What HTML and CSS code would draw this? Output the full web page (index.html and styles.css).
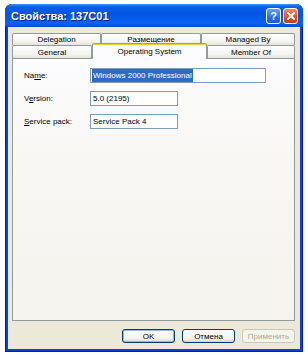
FILE: index.html
```html
<!DOCTYPE html>
<html lang="ru">
<head>
    <meta charset="UTF-8">
    <title>Свойства: 137C01</title>
    <link rel="stylesheet" href="styles.css">
</head>
<body>
<div class="window">
    <div class="titlebar">
        <span class="title">Свойства: 137C01</span>
        <div class="caption-btns">
            <span class="cap-btn help">?</span>
            <span class="cap-btn close">
                <svg width="8" height="8" viewBox="0 0 8 8"><path d="M1 1 L7 7 M7 1 L1 7" stroke="#fff" stroke-width="1.8" stroke-linecap="square"/></svg>
            </span>
        </div>
    </div>

    <div class="client">
        <div class="tabs">
            <div class="tab-row">
                <div class="tab w-deleg">Delegation</div>
                <div class="tab w-razm">Размещение</div>
                <div class="tab w-managed">Managed By</div>
            </div>
            <div class="tab-row">
                <div class="tab w-general">General</div>
                <div class="tab selected w-os">Operating System</div>
                <div class="tab w-member">Member Of</div>
            </div>
        </div>

        <div class="panel">
            <div class="field">
                <span class="label">Na<u>m</u>e:</span>
                <div class="edit wide"><span class="sel">Windows 2000 Professional</span></div>
            </div>
            <div class="field">
                <span class="label">V<u>e</u>rsion:</span>
                <div class="edit">5.0 (2195)</div>
            </div>
            <div class="field">
                <span class="label"><u>S</u>ervice pack:</span>
                <div class="edit">Service Pack 4</div>
            </div>
        </div>

        <div class="buttons">
            <button class="btn default">OK</button>
            <button class="btn">Отмена</button>
            <button class="btn" disabled>Применить</button>
        </div>
    </div>
</div>
</body>
</html>
```

FILE: styles.css
```css
body {
    margin: 0;
    background: #fff;
    font-family: "Liberation Sans", Arial, sans-serif;
    font-size: 8px;
    color: #000;
}

.window {
    margin: 4px 0 0 5px;
    width: 298px;
    height: 348px;
    display: flex;
    flex-direction: column;
    background: #0842d6;
    border-radius: 7px 7px 0 0;
    box-shadow: inset 1px 0 0 #0019a8, inset -1px 0 0 #0019a8, inset 0 -1px 0 #0019a8;
}

.titlebar {
    height: 23px;
    display: flex;
    align-items: center;
    justify-content: space-between;
    padding: 0 5px 0 6px;
    border-radius: 7px 7px 0 0;
    background: linear-gradient(to bottom, #3d95ff 0%, #0a5fe8 12%, #0055e5 45%, #0a63f0 85%, #0048d0 100%);
}

.title {
    color: #fff;
    font-weight: bold;
    font-size: 11px;
    text-shadow: 1px 1px 0 #0a1e80;
    padding-top: 1px;
}

.caption-btns {
    display: flex;
    gap: 2px;
}

.cap-btn {
    width: 13px;
    height: 14px;
    border: 1px solid #fff;
    border-radius: 3px;
    display: flex;
    align-items: center;
    justify-content: center;
    color: #fff;
    font-weight: bold;
    font-size: 11px;
}

.help {
    background: linear-gradient(to bottom, #5ea2ff, #2a6ee8 60%, #1d5ad8);
}

.close {
    background: linear-gradient(to bottom, #f08a62, #e0502a 60%, #c43a12);
}

.client {
    flex: 1;
    margin: 0 3px 3px 3px;
    background: #ece9d8;
    padding: 6px 5px 0 4px;
    display: flex;
    flex-direction: column;
}

.tab-row {
    display: flex;
}

.tab {
    height: 12px;
    line-height: 12px;
    text-align: center;
    border: 1px solid #919b9c;
    border-bottom: none;
    border-radius: 2px 2px 0 0;
    background: linear-gradient(to bottom, #fff, #f3f3ef 70%, #e4e2da);
    box-sizing: border-box;
}

.tab-row + .tab-row .tab {
    height: 13px;
    line-height: 13px;
}

.w-deleg { width: 89px; }
.w-razm { width: 100px; }
.w-managed { width: 94px; }
.w-general { width: 80px; }
.w-os { width: 115px; }
.w-member { width: 88px; }

.tab-row + .tab-row .tab.selected {
    position: relative;
    height: 16px;
    line-height: 15px;
    margin: -2px 0 -1px 0;
    background: #fcfcfe;
    border-top: 1px solid #e68b2c;
    box-shadow: inset 0 1px 0 #ffc73c;
}

.panel {
    height: 263px;
    box-sizing: border-box;
    border: 1px solid #919b9c;
    background: linear-gradient(to bottom, #fcfcfe 0%, #f8f7f3 40%, #f5f3ee 100%);
    padding: 9px 0 0 11px;
    display: flex;
    flex-direction: column;
    gap: 8px;
}

.field {
    display: flex;
    align-items: center;
}

.label {
    width: 66px;
}

.edit {
    width: 88px;
    height: 15px;
    box-sizing: border-box;
    border: 1px solid #7f9db9;
    background: #fff;
    line-height: 13px;
    padding-left: 2px;
    white-space: nowrap;
}

.edit.wide {
    width: 176px;
    padding-left: 1px;
}

.sel {
    display: inline-block;
    background: #316ac5;
    color: #fff;
    padding: 0 1px;
}

.buttons {
    display: flex;
    justify-content: flex-end;
    gap: 7px;
    margin-top: 8px;
}

.btn {
    width: 53px;
    height: 14px;
    padding: 0;
    font-family: "Liberation Sans", Arial, sans-serif;
    font-size: 8px;
    color: #000;
    border: 1px solid #003c74;
    border-radius: 3px;
    background: linear-gradient(to bottom, #fff, #f4f4f0 70%, #d8d4ca);
}

.btn.default {
    box-shadow: inset 0 0 0 1px #98b8ea;
}

.btn:disabled {
    color: #aca899;
    border-color: #c9c7ba;
    background: #f5f4ea;
}
```
